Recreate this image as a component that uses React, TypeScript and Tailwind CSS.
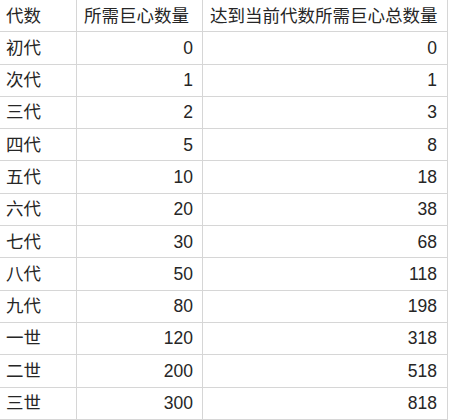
import React from "react";

const rows: [string, string, string][] = [
  ["初代", "0", "0"],
  ["次代", "1", "1"],
  ["三代", "2", "3"],
  ["四代", "5", "8"],
  ["五代", "10", "18"],
  ["六代", "20", "38"],
  ["七代", "30", "68"],
  ["八代", "50", "118"],
  ["九代", "80", "198"],
  ["一世", "120", "318"],
  ["二世", "200", "518"],
  ["三世", "300", "818"],
];

export default function App() {
  return (
    <div
      className="w-[450px] h-[420px] bg-white overflow-hidden text-[#262626] text-[17.5px]"
      style={{ fontFamily: '"Liberation Sans", "Noto Sans CJK SC", sans-serif' }}
    >
      <div className="flex flex-col w-[448px]">
        <div className="flex h-[32.3px] border-b border-[#d6d6d6]">
          <div className="w-[77px] border-r border-[#d6d6d6] flex items-center pl-[6px]">代数</div>
          <div className="w-[126px] border-r border-[#d6d6d6] flex items-center pl-[7px] whitespace-nowrap">所需巨心数量</div>
          <div className="w-[245px] border-r border-[#d6d6d6] flex items-center pl-[7px] whitespace-nowrap">达到当前代数所需巨心总数量</div>
        </div>
        {rows.map((r) => (
          <div key={r[0]} className="flex h-[32.3px] border-b border-[#d6d6d6]">
            <div className="w-[77px] border-r border-[#d6d6d6] flex items-center pl-[6px]">{r[0]}</div>
            <div className="w-[126px] border-r border-[#d6d6d6] flex items-center justify-end pr-[9px]">{r[1]}</div>
            <div className="w-[245px] border-r border-[#d6d6d6] flex items-center justify-end pr-[10px]">{r[2]}</div>
          </div>
        ))}
      </div>
    </div>
  );
}
